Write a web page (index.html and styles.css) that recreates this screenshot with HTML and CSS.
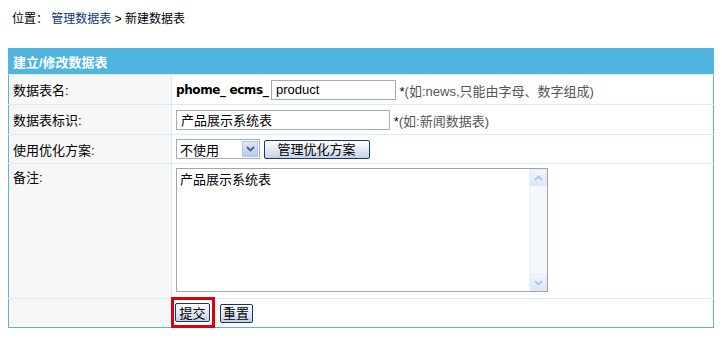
FILE: index.html
```html
<!DOCTYPE html>
<html lang="zh-CN">
<head>
    <meta charset="UTF-8">
    <title>新建数据表</title>
    <link rel="stylesheet" href="styles.css">
</head>
<body>
    <div class="crumb">
        位置： <a href="#">管理数据表</a> &gt; 新建数据表
    </div>

    <form class="form">
        <table class="tableborder">
            <tr class="header">
                <td colspan="2">建立/修改数据表</td>
            </tr>
            <tr class="row-1">
                <td class="label">数据表名:</td>
                <td class="value">
                    <strong class="prefix">phome_ ecms_</strong>
                    <input type="text" class="txt txt-name" value="product">
                    <span class="note"><b>*</b>(如:news,只能由字母、数字组成)</span>
                </td>
            </tr>
            <tr class="row-2">
                <td class="label">数据表标识:</td>
                <td class="value">
                    <input type="text" class="txt txt-title" value="产品展示系统表">
                    <span class="note"><b>*</b>(如:新闻数据表)</span>
                </td>
            </tr>
            <tr class="row-3">
                <td class="label">使用优化方案:</td>
                <td class="value">
                    <span class="select">
                        <select>
                            <option>不使用</option>
                        </select>
                        <span class="select-arrow">
                            <svg width="9" height="6" viewBox="0 0 9 6"><path d="M1 1 L4.5 4.5 L8 1" fill="none" stroke="#4d6185" stroke-width="1.8"/></svg>
                        </span>
                    </span>
                    <button type="button" class="btn btn-wide">管理优化方案</button>
                </td>
            </tr>
            <tr class="row-4">
                <td class="label top">备注:</td>
                <td class="value top">
                    <div class="area">
                        <textarea>产品展示系统表</textarea>
                        <div class="scroll">
                            <span class="scroll-btn">
                                <svg width="9" height="6" viewBox="0 0 9 6"><path d="M1 5 L4.5 1.5 L8 5" fill="none" stroke="#a9bcd8" stroke-width="1.6"/></svg>
                            </span>
                            <span class="scroll-track"></span>
                            <span class="scroll-btn">
                                <svg width="9" height="6" viewBox="0 0 9 6"><path d="M1 1 L4.5 4.5 L8 1" fill="none" stroke="#a9bcd8" stroke-width="1.6"/></svg>
                            </span>
                        </div>
                    </div>
                </td>
            </tr>
            <tr class="row-5">
                <td class="label"></td>
                <td class="value actions">
                    <span class="mark"><button type="submit" class="btn">提交</button></span>
                    <button type="reset" class="btn btn-reset">重置</button>
                </td>
            </tr>
        </table>
    </form>
</body>
</html>
```

FILE: styles.css
```css
body {
    margin: 8px;
    font-family: "Liberation Sans", "Noto Sans CJK SC", sans-serif;
    font-size: 12px;
    color: #000;
    background: #fff;
}

.crumb {
    height: 22px;
    line-height: 22px;
    padding: 0 4px;
    margin-bottom: 18px;
}

.crumb a {
    color: #0c3677;
    text-decoration: none;
}

.form {
    margin: 0;
}

.tableborder {
    width: 100%;
    border-collapse: collapse;
    border: 1px solid #56b4dd;
    font-size: 13px;
}

.tableborder td {
    border-top: 1px solid #d6ecf6;
    padding: 0 4px;
    vertical-align: middle;
}

.header td {
    height: 25px;
    background: #4fb4de;
    color: #fff;
    font-weight: bold;
    border-top: none;
}

.label {
    width: 154px;
    background: #f7f7f7;
    border-right: 1px solid #d6ecf6;
}

.value {
    background: #fff;
}

.top {
    vertical-align: top !important;
}

.row-1 td { height: 29px; }
.row-2 td { height: 29px; }
.row-3 td { height: 28px; }
.row-4 td { height: 130px; }
.row-5 td { height: 28px; }

.row-4 .label {
    padding-top: 3px;
}

.row-4 .value {
    padding-top: 4px;
}

.prefix {
    font-family: "DejaVu Sans", sans-serif;
    font-size: 12px;
    font-weight: bold;
    letter-spacing: -0.4px;
    vertical-align: middle;
}

.txt {
    height: 20px;
    box-sizing: border-box;
    border: 1px solid #a5acb2;
    padding: 0 4px;
    font-family: "Liberation Sans", "Noto Sans CJK SC", sans-serif;
    font-size: 13px;
    color: #000;
    vertical-align: middle;
}

.txt-name {
    width: 125px;
    margin-left: -1px;
}

.txt-title {
    width: 214px;
}

.note {
    color: #555;
    vertical-align: middle;
}

.note b {
    color: #000;
    font-weight: normal;
}

.select {
    display: inline-flex;
    width: 84px;
    height: 20px;
    box-sizing: border-box;
    border: 1px solid #a5acb2;
    vertical-align: middle;
    background: #fff;
}

.select select {
    flex: 1;
    min-width: 0;
    border: none;
    outline: none;
    appearance: none;
    -webkit-appearance: none;
    background: transparent;
    padding: 0 3px;
    font-family: "Noto Sans CJK SC", sans-serif;
    font-size: 13px;
    color: #000;
}

.select-arrow {
    width: 16px;
    margin: 1px;
    display: flex;
    align-items: center;
    justify-content: center;
    background: linear-gradient(#dfe8f6, #b8cbe8);
    border: 1px solid #b3c5e2;
    box-sizing: border-box;
}

.btn {
    height: 19px;
    padding: 0 2px;
    border: 1px solid #1f3561;
    border-radius: 2px;
    background: linear-gradient(#ffffff, #dde5f2 60%, #c4d2e8);
    font-family: "Noto Sans CJK SC", sans-serif;
    font-size: 13px;
    line-height: 16px;
    color: #000;
    white-space: nowrap;
    vertical-align: middle;
    cursor: pointer;
}

.btn-wide {
    width: 106px;
}

.area {
    display: flex;
    width: 372px;
    height: 124px;
    box-sizing: border-box;
    border: 1px solid #a5a5a5;
    background: #fff;
}

.area textarea {
    flex: 1;
    border: none;
    outline: none;
    resize: none;
    padding: 2px 3px;
    font-family: "Noto Sans CJK SC", sans-serif;
    font-size: 13px;
    line-height: 16px;
    color: #000;
}

.scroll {
    width: 17px;
    display: flex;
    flex-direction: column;
    background: #f4f7fd;
    border-left: 1px solid #eef2fa;
}

.scroll-btn {
    height: 17px;
    display: flex;
    align-items: center;
    justify-content: center;
    background: linear-gradient(#f1f5fd, #dce6f7);
    border: 1px solid #e2e9f6;
    box-sizing: border-box;
}

.scroll-track {
    flex: 1;
}

.actions {
    padding: 0 !important;
}

.mark {
    display: inline-block;
    border: 3px solid #e0000b;
    padding: 3px 2px 3px 1px;
    margin: -3px 1px -2px -1px;
    vertical-align: middle;
}

.mark .btn {
    display: block;
    width: 35px;
}

.btn-reset {
    width: 33px;
}
```
